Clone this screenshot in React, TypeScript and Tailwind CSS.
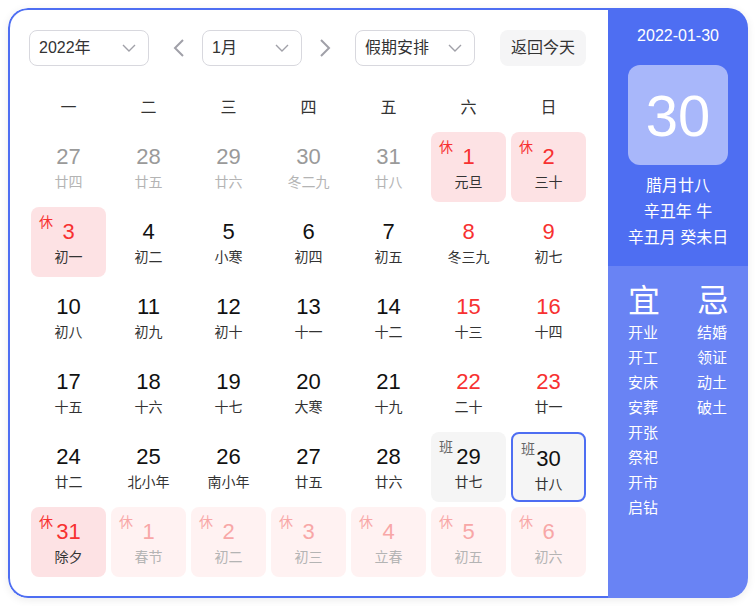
import type { ReactNode } from 'react'

type Kind = 'prev' | 'normal' | 'red' | 'rest' | 'work' | 'next'

type Day = {
  d: number
  lunar: string
  kind: Kind
  selected?: boolean
}

const weekdays = ['一', '二', '三', '四', '五', '六', '日']

const days: Day[] = [
  { d: 27, lunar: '廿四', kind: 'prev' },
  { d: 28, lunar: '廿五', kind: 'prev' },
  { d: 29, lunar: '廿六', kind: 'prev' },
  { d: 30, lunar: '冬二九', kind: 'prev' },
  { d: 31, lunar: '廿八', kind: 'prev' },
  { d: 1, lunar: '元旦', kind: 'rest' },
  { d: 2, lunar: '三十', kind: 'rest' },
  { d: 3, lunar: '初一', kind: 'rest' },
  { d: 4, lunar: '初二', kind: 'normal' },
  { d: 5, lunar: '小寒', kind: 'normal' },
  { d: 6, lunar: '初四', kind: 'normal' },
  { d: 7, lunar: '初五', kind: 'normal' },
  { d: 8, lunar: '冬三九', kind: 'red' },
  { d: 9, lunar: '初七', kind: 'red' },
  { d: 10, lunar: '初八', kind: 'normal' },
  { d: 11, lunar: '初九', kind: 'normal' },
  { d: 12, lunar: '初十', kind: 'normal' },
  { d: 13, lunar: '十一', kind: 'normal' },
  { d: 14, lunar: '十二', kind: 'normal' },
  { d: 15, lunar: '十三', kind: 'red' },
  { d: 16, lunar: '十四', kind: 'red' },
  { d: 17, lunar: '十五', kind: 'normal' },
  { d: 18, lunar: '十六', kind: 'normal' },
  { d: 19, lunar: '十七', kind: 'normal' },
  { d: 20, lunar: '大寒', kind: 'normal' },
  { d: 21, lunar: '十九', kind: 'normal' },
  { d: 22, lunar: '二十', kind: 'red' },
  { d: 23, lunar: '廿一', kind: 'red' },
  { d: 24, lunar: '廿二', kind: 'normal' },
  { d: 25, lunar: '北小年', kind: 'normal' },
  { d: 26, lunar: '南小年', kind: 'normal' },
  { d: 27, lunar: '廿五', kind: 'normal' },
  { d: 28, lunar: '廿六', kind: 'normal' },
  { d: 29, lunar: '廿七', kind: 'work' },
  { d: 30, lunar: '廿八', kind: 'work', selected: true },
  { d: 31, lunar: '除夕', kind: 'rest' },
  { d: 1, lunar: '春节', kind: 'next' },
  { d: 2, lunar: '初二', kind: 'next' },
  { d: 3, lunar: '初三', kind: 'next' },
  { d: 4, lunar: '立春', kind: 'next' },
  { d: 5, lunar: '初五', kind: 'next' },
  { d: 6, lunar: '初六', kind: 'next' },
]

const good = ['开业', '开工', '安床', '安葬', '开张', '祭祀', '开市', '启钻']
const bad = ['结婚', '领证', '动土', '破土']

const cellBg: Record<Kind, string> = {
  prev: '',
  normal: '',
  red: '',
  rest: 'bg-[#fde2e4]',
  work: 'bg-[#f5f5f5]',
  next: 'bg-[#fff2f2]',
}

const numColor: Record<Kind, string> = {
  prev: 'text-[#9a9a9a]',
  normal: 'text-[#111]',
  red: 'text-[#f73131]',
  rest: 'text-[#f73131]',
  work: 'text-[#111]',
  next: 'text-[#f8a7a7]',
}

const lunarColor: Record<Kind, string> = {
  prev: 'text-[#b4b4b4]',
  normal: 'text-[#333]',
  red: 'text-[#333]',
  rest: 'text-[#333]',
  work: 'text-[#333]',
  next: 'text-[#b4b4b4]',
}

function Chevron() {
  return (
    <svg width="14" height="8" viewBox="0 0 14 8" fill="none">
      <polyline points="1,1 7,7 13,1" stroke="#a0a0a8" strokeWidth="1.4" />
    </svg>
  )
}

function Arrow({ dir }: { dir: 'left' | 'right' }) {
  return (
    <svg width="12" height="20" viewBox="0 0 12 20" fill="none">
      <polyline
        points={dir === 'left' ? '10,2 2,10 10,18' : '2,2 10,10 2,18'}
        stroke="#a0a0a8"
        strokeWidth="2"
      />
    </svg>
  )
}

function Select({ width, children }: { width: string; children: ReactNode }) {
  return (
    <div
      className={`flex h-[36px] items-center justify-between rounded-[8px] border border-[#d8d8de] pl-[9px] pr-[12px] text-[16px] text-[#333] ${width}`}
    >
      <span>{children}</span>
      <Chevron />
    </div>
  )
}

function Cell({ day }: { day: Day }) {
  const tag =
    day.kind === 'rest' ? (
      <span className="absolute left-[8px] top-[6px] text-[14px] leading-[18px] text-[#f73131]">休</span>
    ) : day.kind === 'next' ? (
      <span className="absolute left-[8px] top-[6px] text-[14px] leading-[18px] text-[#f8a7a7]">休</span>
    ) : day.kind === 'work' ? (
      <span className="absolute left-[8px] top-[6px] text-[14px] leading-[18px] text-[#666]">班</span>
    ) : null

  return (
    <div
      className={`relative flex h-[70px] flex-col items-center rounded-[8px] pt-[12px] ${cellBg[day.kind]} ${
        day.selected ? 'border-2 border-[#4e6ef2] pt-[10px]' : ''
      }`}
    >
      {tag}
      <span className={`text-[22px] leading-[26px] ${numColor[day.kind]}`}>{day.d}</span>
      <span className={`mt-[2px] text-[14px] leading-[20px] ${lunarColor[day.kind]}`}>{day.lunar}</span>
    </div>
  )
}

export default function App() {
  return (
    <div
      className="p-[8px]"
      style={{ fontFamily: '"Liberation Sans", "Noto Sans CJK SC", sans-serif' }}
    >
      <div className="flex h-[590px] w-[740px] overflow-hidden rounded-[20px] shadow-[0_2px_8px_rgba(0,0,0,0.08)]">
        {/* calendar */}
        <div className="w-[600px] rounded-l-[20px] border-y-2 border-l-2 border-[#4e6ef2] bg-white pl-[19px] pt-[20px]">
          <div className="flex items-center">
            <Select width="w-[120px]">2022年</Select>
            <div className="ml-[23px] mr-[16px] flex w-[14px] justify-center">
              <Arrow dir="left" />
            </div>
            <Select width="w-[100px]">1月</Select>
            <div className="ml-[16px] mr-[23px] flex w-[14px] justify-center">
              <Arrow dir="right" />
            </div>
            <Select width="w-[120px]">假期安排</Select>
            <button className="ml-[25px] h-[36px] w-[86px] rounded-[8px] bg-[#f5f5f6] text-[16px] text-[#333]">
              返回今天
            </button>
          </div>

          <div className="ml-[2px] mt-[24px] grid grid-cols-[repeat(7,75px)] gap-x-[5px]">
            {weekdays.map((w) => (
              <div key={w} className="flex h-[36px] items-center justify-center text-[16px] text-[#333]">
                {w}
              </div>
            ))}
          </div>

          <div className="ml-[2px] mt-[6px] grid grid-cols-[repeat(7,75px)] gap-[5px]">
            {days.map((day, i) => (
              <Cell key={i} day={day} />
            ))}
          </div>
        </div>

        {/* side panel */}
        <div className="flex w-[140px] flex-col text-white">
          <div className="flex h-[258px] flex-col items-center bg-[#4e6ef2] pt-[17px]">
            <div className="text-[16px] leading-[22px]">2022-01-30</div>
            <div className="mt-[18px] flex h-[100px] w-[100px] items-center justify-center rounded-[12px] bg-[#a8b7fa] text-[58px]">
              30
            </div>
            <div className="mt-[8px] flex flex-col items-center text-[16px] leading-[26px]">
              <span>腊月廿八</span>
              <span>辛丑年 牛</span>
              <span>辛丑月 癸未日</span>
            </div>
          </div>
          <div className="flex flex-1 bg-[#6983f4] pl-[20px] pt-[16px]">
            <div className="w-[69px]">
              <div className="text-[32px] leading-[38px]">宜</div>
              {good.map((g) => (
                <div key={g} className="text-[15px] leading-[25px]">
                  {g}
                </div>
              ))}
            </div>
            <div>
              <div className="text-[32px] leading-[38px]">忌</div>
              {bad.map((g) => (
                <div key={g} className="text-[15px] leading-[25px]">
                  {g}
                </div>
              ))}
            </div>
          </div>
        </div>
      </div>
    </div>
  )
}
